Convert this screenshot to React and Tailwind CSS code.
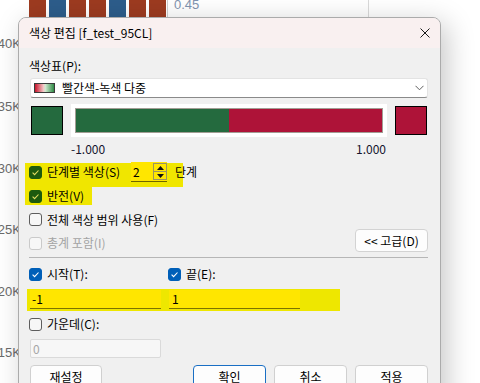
import React from 'react';

const bars = ['r', 'b', 'r', 'r', 'b', 'r', 'r'];
const ticks = [
  ['40K', 44],
  ['35K', 107],
  ['30K', 169],
  ['25K', 230],
  ['20K', 292],
  ['15K', 353],
];

const Chk = ({ v }) => {
  const cls = {
    on: 'bg-[#005fb8] border-[#005fb8]',
    hl: 'bg-[#1d5a0e] border-[#1d5a0e]',
    off: 'bg-[#f7f7f7] border-[#5d5d5d]',
    dis: 'bg-[#f7f7f7] border-[#cacaca]',
  }[v];
  return (
    <span className={`flex h-[13px] w-[13px] shrink-0 items-center justify-center rounded-[3px] border ${cls}`}>
      {(v === 'on' || v === 'hl') && (
        <svg width="9" height="9" viewBox="0 0 9 9">
          <path
            d="M1.6 4.7 L3.6 6.7 L7.5 2.5"
            fill="none"
            stroke={v === 'on' ? '#ffffff' : '#e4dc62'}
            strokeWidth="1.1"
          />
        </svg>
      )}
    </span>
  );
};

const Btn = ({ children, className = '' }) => (
  <div
    className={`flex h-[23px] items-center justify-center rounded-[4px] border bg-[#fdfdfd] ${className}`}
  >
    {children}
  </div>
);

export default function App() {
  return (
    <div className="relative h-[383px] w-[480px] overflow-hidden bg-white font-['Noto_Sans_CJK_KR',sans-serif] text-[12px] leading-[16px] text-black">
      {/* chart behind the dialog */}
      <div className="absolute left-[29px] top-0 flex gap-[3px]">
        {bars.map((c, i) => (
          <div
            key={i}
            className={`h-[20px] w-[17px] ${c === 'r' ? 'bg-[#9d3b20]' : 'bg-[#2d5d8b]'}`}
          />
        ))}
      </div>
      <div className="absolute left-[167px] top-0 h-[20px] w-px bg-[#cfcfcf]" />
      <div className="absolute left-[174px] top-[-3px] font-['Liberation_Sans',sans-serif] text-[13px] text-[#8194b0]">
        0.45
      </div>
      <div className="absolute left-[368px] top-0 h-[20px] w-px bg-[#dadada]" />
      {ticks.map(([t, y]) => (
        <div
          key={t}
          className="absolute right-[459px] font-['Liberation_Sans',sans-serif] text-[13px] text-[#6b6b6b]"
          style={{ top: y - 8 }}
        >
          {t}
        </div>
      ))}

      {/* dialog window */}
      <div className="absolute left-[18px] top-[17px] h-[400px] w-[423px] overflow-hidden rounded-t-[8px] border border-[#ababab] bg-[#f0f0f0] shadow-[6px_6px_28px_rgba(0,0,0,0.22)]">
        <div className="flex h-[30px] items-center justify-between bg-[#f9f0f0] pl-[10px] pr-[10px]">
          <span>색상 편집 [f_test_95CL]</span>
          <svg width="10" height="10" viewBox="0 0 10 10">
            <path d="M0.5 0.5 L9.5 9.5 M9.5 0.5 L0.5 9.5" stroke="#1a1a1a" strokeWidth="1" />
          </svg>
        </div>

        <div className="relative pl-[10px] pr-[12px] pt-[10px]">
          {/* highlighter marks */}
          <div className="absolute left-[6px] top-[115px] h-[24px] w-[158px] bg-[#f0e600]" />
          <div className="absolute left-[6px] top-[138px] h-[19px] w-[67px] bg-[#f0e600]" />
          <div className="absolute left-[8px] top-[241px] h-[22px] w-[313px] bg-[#eee700]" />

          <div className="relative">
            <div>색상표(P):</div>
            <div className="ml-px mt-[4px] flex h-[20px] items-center rounded-[3px] border border-[#e3e3e3] border-b-[#8a8a8a] bg-white pl-[3px] pr-[3px]">
              <div className="h-[10px] w-[21px] border border-[#3a3a3a] bg-[linear-gradient(to_right,#c8142c,#f3c9c9_45%,#cfe8cf_55%,#2e8a45)]" />
              <span className="ml-[7px]">빨간색-녹색 다중</span>
              <svg className="ml-auto" width="9" height="6" viewBox="0 0 9 6">
                <path d="M0.5 0.8 L4.5 4.8 L8.5 0.8" fill="none" stroke="#606060" strokeWidth="1" />
              </svg>
            </div>

            <div className="mt-[6px] flex items-center">
              <div className="ml-[2px] h-[29px] w-[32px] border border-black bg-[#246a3e]" />
              <div className="ml-[8px] flex h-[33px] w-[316px] bg-white p-[4px]">
                <div className="flex flex-1 border border-[#a29d94]">
                  <div className="w-1/2 bg-[#246a3e]" />
                  <div className="flex-1 bg-[#ae1338]" />
                </div>
              </div>
              <div className="ml-[8px] h-[29px] w-[32px] border border-black bg-[#ae1338]" />
            </div>

            <div className="ml-[42px] mt-[4px] flex w-[315px] justify-between text-[#15152e]">
              <span>-1.000</span>
              <span>1.000</span>
            </div>

            <div className="mt-[3px] flex h-[24px] items-center">
              <Chk v="hl" />
              <span className="ml-[5px] w-[84px]">단계별 색상(S)</span>
              <div className="flex h-[20px] w-[36px] border-b border-[#6e6400] bg-[#ffe600]">
                <span className="flex-1 pl-[2px] leading-[19px]">2</span>
                <div className="my-[1px] flex w-[14px] flex-col border border-[#9a9460]">
                  <div className="flex flex-1 items-center justify-center border-b border-[#9a9460]">
                    <svg width="7" height="4" viewBox="0 0 7 4">
                      <path d="M0 4 L3.5 0 L7 4 Z" fill="#111" />
                    </svg>
                  </div>
                  <div className="flex flex-1 items-center justify-center">
                    <svg width="7" height="4" viewBox="0 0 7 4">
                      <path d="M0 0 L3.5 4 L7 0 Z" fill="#111" />
                    </svg>
                  </div>
                </div>
              </div>
              <span className="ml-[8px]">단계</span>
            </div>

            <div className="flex h-[24px] items-center">
              <Chk v="hl" />
              <span className="ml-[5px]">반전(V)</span>
            </div>

            <div className="flex h-[23px] items-center">
              <Chk v="off" />
              <span className="ml-[5px]">전체 색상 범위 사용(F)</span>
            </div>

            <div className="flex h-[24px] items-center">
              <Chk v="dis" />
              <span className="ml-[5px] text-[#a3a3a3]">총계 포함(I)</span>
              <Btn className="-mt-[2px] ml-auto h-[21px] w-[73px] self-start border-[#d3d3d3]">
                &lt;&lt; 고급(D)
              </Btn>
            </div>

            <div className="mt-[2px] h-px bg-[#b6b6b6]" />

            <div className="mt-[4px] flex h-[24px] items-center">
              <div className="flex w-[139px] items-center">
                <Chk v="on" />
                <span className="ml-[5px]">시작(T):</span>
              </div>
              <div className="flex items-center">
                <Chk v="on" />
                <span className="ml-[5px]">끝(E):</span>
              </div>
            </div>

            <div className="mt-[4px] flex">
              <div className="ml-px h-[19px] w-[131px] border-b border-[#7d7300] bg-[#ffe600] pl-[2px] leading-[18px]">
                -1
              </div>
              <div className="ml-[8px] h-[19px] w-[131px] border-b border-[#7d7300] bg-[#ffe600] pl-[3px] leading-[18px]">
                1
              </div>
            </div>

            <div className="mt-[3px] flex h-[24px] items-center">
              <Chk v="off" />
              <span className="ml-[5px]">가운데(C):</span>
            </div>

            <div className="ml-px mt-[3px] h-[19px] w-[131px] rounded-[2px] border border-[#dadada] bg-[#f7f7f7] pl-[2px] leading-[17px] text-[#a6a6a6]">
              0
            </div>

            <div className="mt-[7px] flex">
              <Btn className="ml-px w-[72px] border-[#d0d0d0]">재설정</Btn>
              <Btn className="ml-auto w-[73px] border-[#1a6fc4]">확인</Btn>
              <Btn className="ml-[8px] w-[73px] border-[#d0d0d0]">취소</Btn>
              <Btn className="ml-[8px] w-[73px] border-[#d0d0d0]">적용</Btn>
            </div>
          </div>
        </div>
      </div>
    </div>
  );
}
